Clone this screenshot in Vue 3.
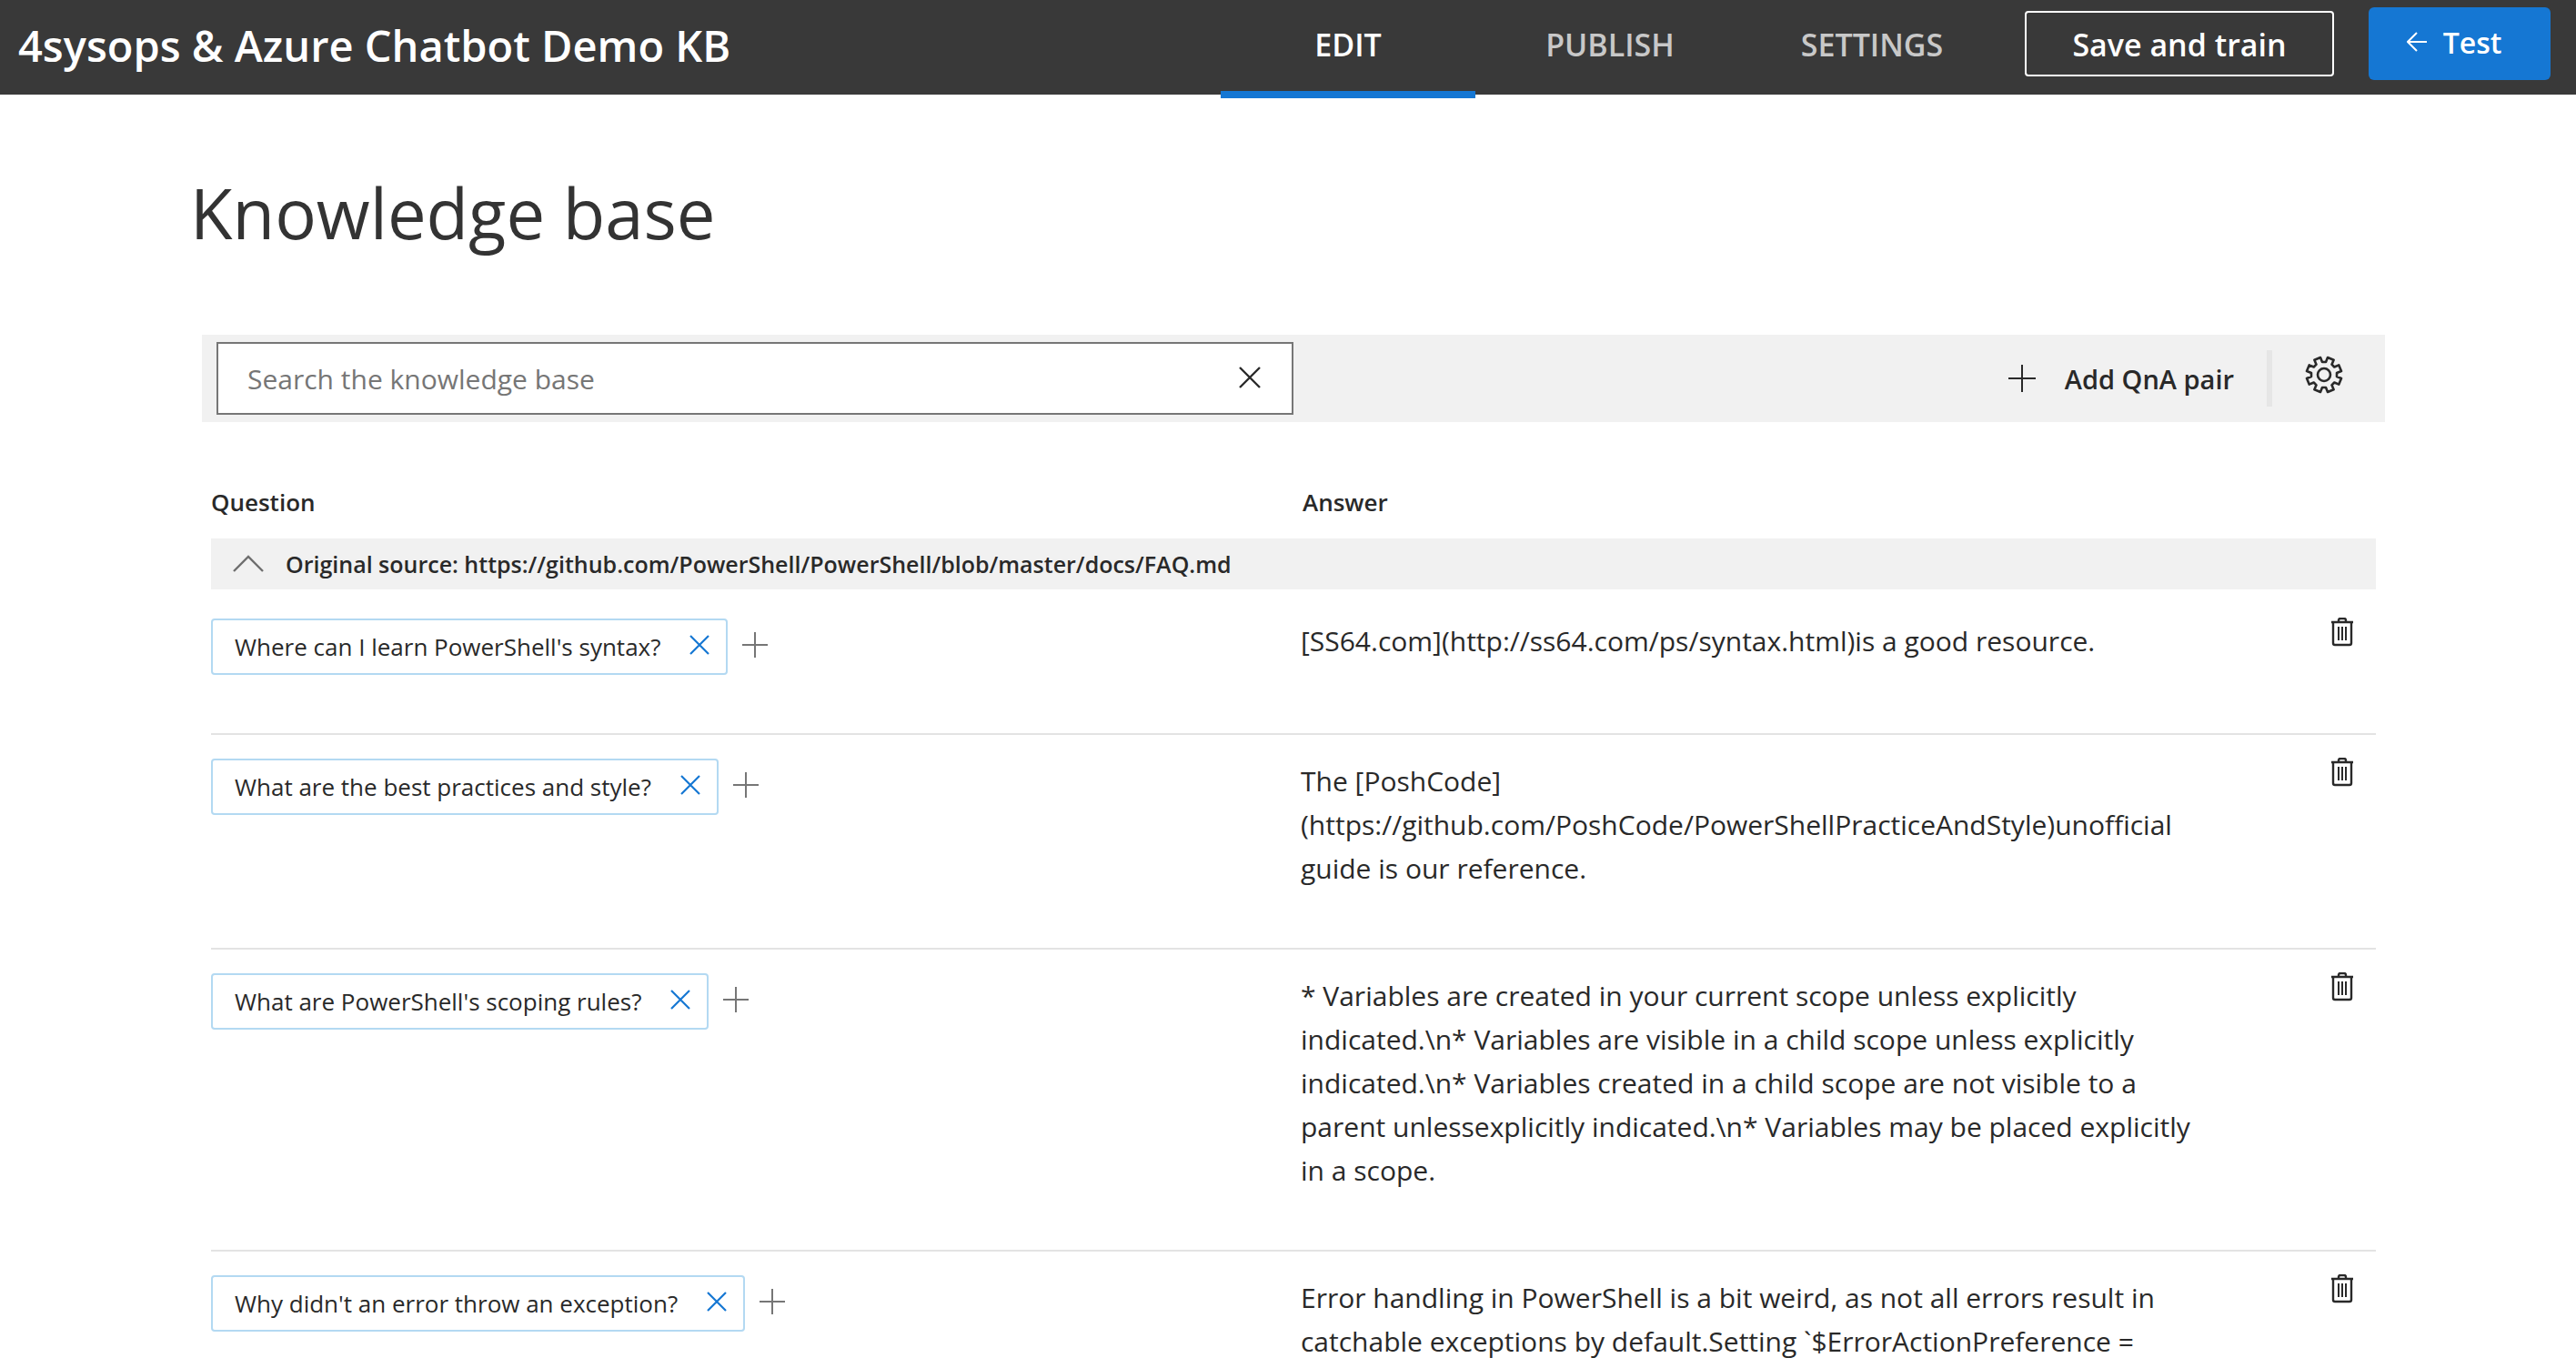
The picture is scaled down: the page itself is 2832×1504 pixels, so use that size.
<script setup>
import { ref } from 'vue'

const tabs = ['EDIT', 'PUBLISH', 'SETTINGS']
const activeTab = ref('EDIT')
const query = ref('')

const pairs = ref([
  {
    question: "Where can I learn PowerShell's syntax?",
    answer: '[SS64.com](http://ss64.com/ps/syntax.html)is a good resource.',
  },
  {
    question: 'What are the best practices and style?',
    answer:
      'The [PoshCode](https://github.com/PoshCode/PowerShellPracticeAndStyle)unofficial guide is our reference.',
  },
  {
    question: "What are PowerShell's scoping rules?",
    answer:
      '* Variables are created in your current scope unless explicitly indicated.\\n* Variables are visible in a child scope unless explicitly indicated.\\n* Variables created in a child scope are not visible to a parent unlessexplicitly indicated.\\n* Variables may be placed explicitly in a scope.',
  },
  {
    question: "Why didn't an error throw an exception?",
    answer:
      'Error handling in PowerShell is a bit weird, as not all errors result in catchable exceptions by default.Setting `$ErrorActionPreference =',
  },
])

// Eight-toothed gear: one notch profile repeated every 45 degrees.
const notch = [[-4, -19], [-2, -14], [2, -14], [4, -19]]
const gearPoints = Array.from({ length: 8 }, (_, i) => {
  const a = (i * Math.PI) / 4
  return notch
    .map(([x, y]) => [
      (21 + x * Math.cos(a) - y * Math.sin(a)).toFixed(1),
      (21 + x * Math.sin(a) + y * Math.cos(a)).toFixed(1),
    ].join(','))
    .join(' ')
}).join(' ')
</script>

<template>
  <div class="shell">
    <header class="topbar">
      <div class="kb-name">4sysops &amp; Azure Chatbot Demo KB</div>
      <nav class="tabs">
        <a
          v-for="tab in tabs"
          :key="tab"
          href="#"
          class="tab"
          :class="{ active: tab === activeTab }"
          @click.prevent="activeTab = tab"
        >{{ tab }}</a>
      </nav>
      <button type="button" class="save">Save and train</button>
      <button type="button" class="test">
        <svg width="22" height="22" viewBox="0 0 22 22" fill="none" stroke="currentColor" stroke-width="2">
          <path d="M22 11H2M11 1L1 11l10 10" />
        </svg>
        <span>Test</span>
      </button>
    </header>

    <main class="page">
      <h1>Knowledge base</h1>

      <div class="toolbar">
        <div class="search">
          <input v-model="query" type="text" aria-label="Search the knowledge base" placeholder="Search the knowledge base" />
          <button type="button" class="icon clear" aria-label="Clear search" @click="query = ''">
            <svg width="24" height="24" viewBox="0 0 24 24" fill="none" stroke="currentColor" stroke-width="2.4">
              <path d="M1 1l22 22M23 1L1 23" />
            </svg>
          </button>
        </div>
        <button type="button" class="add-pair">
          <svg width="30" height="30" viewBox="0 0 30 30" fill="none" stroke="currentColor" stroke-width="2">
            <path d="M15 0v30M0 15h30" />
          </svg>
          <span>Add QnA pair</span>
        </button>
        <span class="divider"></span>
        <button type="button" class="icon settings" aria-label="View options">
          <svg width="42" height="42" viewBox="0 0 42 42" fill="none" stroke="currentColor" stroke-width="2.6" stroke-linejoin="round">
            <polygon :points="gearPoints" />
            <circle cx="21" cy="21" r="7" />
          </svg>
        </button>
      </div>

      <table class="pairs">
        <colgroup>
          <col class="col-question" />
          <col />
          <col class="col-action" />
        </colgroup>
        <thead>
          <tr>
            <th scope="col">Question</th>
            <th scope="col" class="answer-head">Answer</th>
            <td></td>
          </tr>
        </thead>
        <tbody>
          <tr>
            <th colspan="3" scope="rowgroup" class="source-cell">
              <div class="source">
                <button type="button" class="icon" aria-label="Collapse source">
                  <svg width="34" height="20" viewBox="0 0 34 20" fill="none" stroke="currentColor" stroke-width="2.4">
                    <path d="M1 18L17 2l16 16" />
                  </svg>
                </button>
                <span>Original source: https://github.com/PowerShell/PowerShell/blob/master/docs/FAQ.md</span>
              </div>
            </th>
          </tr>
          <tr v-for="pair in pairs" :key="pair.question" class="pair">
            <td class="question">
              <div class="chips">
                <span class="chip">
                  <span>{{ pair.question }}</span>
                  <button type="button" class="icon remove" aria-label="Remove question">
                    <svg width="22" height="22" viewBox="0 0 22 22" fill="none" stroke="currentColor" stroke-width="2.2">
                      <path d="M1 1l20 20M21 1L1 21" />
                    </svg>
                  </button>
                </span>
                <button type="button" class="icon plus" aria-label="Add alternative question">
                  <svg width="28" height="28" viewBox="0 0 28 28" fill="none" stroke="currentColor" stroke-width="2">
                    <path d="M14 0v28M0 14h28" />
                  </svg>
                </button>
              </div>
            </td>
            <td class="answer">{{ pair.answer }}</td>
            <td class="action">
              <button type="button" class="icon" aria-label="Delete pair">
                <svg width="24" height="32" viewBox="0 0 24 32" fill="none" stroke="currentColor" stroke-width="2.4">
                  <path d="M0 5h24M8 5V3q0-2 2-2h4q2 0 2 2v2" />
                  <path d="M2 5v23q0 2 2 2h16q2 0 2-2V5" />
                  <path d="M8 10v15M12 10v15M16 10v15" stroke-width="2" />
                </svg>
              </button>
            </td>
          </tr>
        </tbody>
      </table>
    </main>
  </div>
</template>

<style>
body {
  margin: 0;
  background: #fff;
}
</style>

<style scoped>
.shell {
  height: 100vh;
  overflow: hidden;
  color: #292929;
  font-family: "Open Sans", "Noto Sans", sans-serif;
}

button {
  font: inherit;
  color: inherit;
  cursor: pointer;
}

svg {
  display: block;
}

.icon {
  display: block;
  flex: none;
  padding: 0;
  border: 0;
  background: none;
}

.topbar {
  display: flex;
  align-items: center;
  box-sizing: border-box;
  height: 104px;
  padding: 0 28px 8px 20px;
  background: #393939;
  color: #fff;
  font-weight: 600;
}

.kb-name {
  flex: 1;
  padding-top: 4px;
  font-size: 47px;
  line-height: 64px;
  white-space: nowrap;
}

.tabs {
  display: flex;
  gap: 8px;
  margin-right: 28px;
}

.tab {
  position: relative;
  width: 280px;
  padding-top: 2px;
  color: #c8c8c8;
  font-size: 34px;
  line-height: 96px;
  text-align: center;
  text-decoration: none;
}

.tab.active {
  color: #fff;
}

.tab.active::after {
  content: "";
  position: absolute;
  right: 0;
  bottom: -11px;
  left: 0;
  height: 8px;
  background: #1577d3;
}

.save {
  width: 340px;
  height: 72px;
  padding: 2px 0 0;
  border: 2px solid #fff;
  border-radius: 4px;
  background: none;
  font-size: 34px;
}

.test {
  display: flex;
  align-items: center;
  justify-content: center;
  gap: 18px;
  width: 200px;
  height: 80px;
  margin-left: 38px;
  padding: 0 12px 4px 0;
  border: 0;
  border-radius: 6px;
  background: #1577d3;
  font-size: 32px;
}

.page {
  padding: 76px 210px 0 222px;
}

h1 {
  margin: 0 0 80px -13px;
  color: #333;
  font-size: 76px;
  font-weight: 400;
  line-height: 108px;
}

.toolbar {
  display: flex;
  align-items: center;
  box-sizing: border-box;
  height: 96px;
  padding: 0 46px 0 16px;
  background: #f1f1f1;
}

.search {
  display: flex;
  align-items: center;
  box-sizing: border-box;
  width: 1184px;
  height: 80px;
  margin-right: auto;
  padding: 0 34px 0 32px;
  border: 2px solid #767676;
  background: #fff;
}

.search input {
  flex: 1;
  min-width: 0;
  padding: 0;
  border: 0;
  outline: 0;
  background: none;
  color: inherit;
  font: inherit;
  font-size: 30px;
}

.search input::placeholder {
  color: #767676;
  opacity: 1;
}

.clear {
  margin-bottom: 2px;
}

.add-pair {
  display: flex;
  align-items: center;
  gap: 32px;
  padding: 0;
  border: 0;
  background: none;
  font-size: 29px;
  font-weight: 600;
}

.divider {
  width: 6px;
  height: 62px;
  margin: 0 36px;
  background: #e6e6e6;
}

.settings {
  margin-bottom: 8px;
}

.pairs {
  width: calc(100% - 20px);
  margin: 0 10px;
  border-spacing: 0;
  table-layout: fixed;
}

.col-question {
  width: 50%;
}

.col-action {
  width: 200px;
}

th,
td {
  padding: 0;
  text-align: left;
  vertical-align: top;
}

thead th {
  padding: 70px 0 22px;
  font-size: 26px;
  font-weight: 600;
  line-height: 36px;
}

thead .answer-head {
  padding-left: 10px;
}

.source-cell {
  padding-bottom: 6px;
}

.source {
  display: flex;
  align-items: center;
  gap: 24px;
  height: 56px;
  padding-left: 24px;
  background: #f1f1f1;
  font-size: 25px;
  font-weight: 600;
}

.source .icon {
  color: #6e6e6e;
}

.pair td {
  border-bottom: 2px solid #e3e3e3;
}

.pair .question {
  padding: 26px 0 64px;
}

.chips {
  display: flex;
  align-items: center;
  gap: 16px;
}

.chip {
  display: flex;
  align-items: center;
  gap: 32px;
  box-sizing: border-box;
  height: 62px;
  padding: 0 18px 0 24px;
  border: 2px solid #b3d9f2;
  border-radius: 4px;
  font-size: 26px;
}

.chips .icon {
  margin-bottom: 4px;
}

.remove {
  color: #1577d3;
}

.plus {
  color: #767676;
}

.pair .answer {
  padding: 27px 0 63px 8px;
  font-size: 30px;
  line-height: 48px;
}

.pair .action {
  padding: 25px 25px 0 0;
}

.action .icon {
  margin-left: auto;
}
</style>
